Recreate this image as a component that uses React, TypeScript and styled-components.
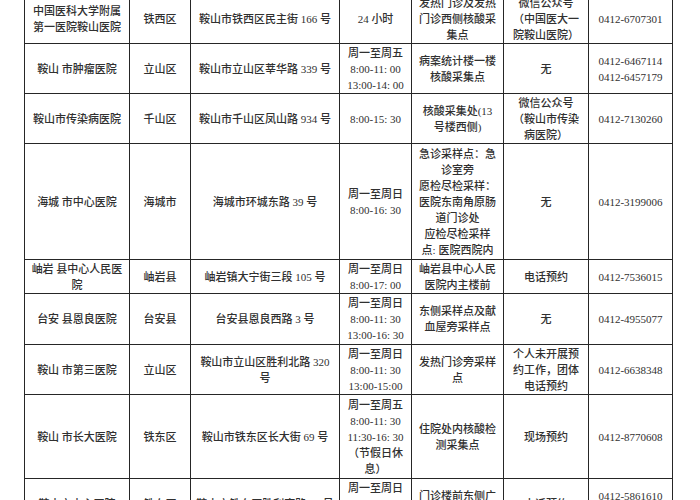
import React from 'react';
import styled, { createGlobalStyle } from 'styled-components';

const Global = createGlobalStyle`
  html, body { margin: 0; padding: 0; background: #ffffff; }
  body { width: 700px; height: 500px; overflow: hidden; }
`;

const Page = styled.div`
  width: 700px;
  height: 500px;
  overflow: hidden;
  background: #ffffff;
  padding-left: 24px;
  box-sizing: border-box;
`;

const Table = styled.table`
  border-collapse: collapse;
  table-layout: fixed;
  width: 648px;
  margin-top: -7px;
  font-family: "Liberation Serif", "Noto Sans CJK SC", serif;
  font-size: 11px;
  font-weight: 500;
  line-height: 16px;
  color: #303030;
`;

const Col = styled.col<{ $w: number }>`
  width: ${(p) => p.$w}px;
`;

const Row = styled.tr<{ $h: number }>`
  height: ${(p) => p.$h}px;
`;

const Cell = styled.td`
  border: 1px solid #262626;
  padding: 0;
  text-align: center;
  vertical-align: middle;
  white-space: nowrap;
  overflow: hidden;
`;

const widths = [105, 61, 149, 72, 92, 85, 84];

type RowData = { h: number; cells: string[][] };

const rows: RowData[] = [
  {
    h: 50,
    cells: [
      ['中国医科大学附属', '第一医院鞍山医院'],
      ['铁西区'],
      ['鞍山市铁西区民主街 166 号'],
      ['24 小时'],
      ['发热门诊及发热', '门诊西侧核酸采', '集点'],
      ['微信公众号', '（中国医大一', '院鞍山医院）'],
      ['0412-6707301'],
    ],
  },
  {
    h: 50,
    cells: [
      ['鞍山 市肿瘤医院'],
      ['立山区'],
      ['鞍山市立山区莘华路 339 号'],
      ['周一至周五', '8:00-11: 00', '13:00-14: 00'],
      ['病案统计楼一楼', '核酸采集点'],
      ['无'],
      ['0412-6467114', '0412-6457179'],
    ],
  },
  {
    h: 50,
    cells: [
      ['鞍山市传染病医院'],
      ['千山区'],
      ['鞍山市千山区凤山路 934 号'],
      ['8:00-15: 30'],
      ['核酸采集处(13', '号楼西侧)'],
      ['微信公众号', '（鞍山市传染', '病医院）'],
      ['0412-7130260'],
    ],
  },
  {
    h: 116,
    cells: [
      ['海城 市中心医院'],
      ['海城市'],
      ['海城市环城东路 39 号'],
      ['周一至周日', '8:00-16: 30'],
      ['急诊采样点：急', '诊室旁', '愿检尽检采样：', '医院东南角原肠', '道门诊处', '应检尽检采样', '点: 医院西院内'],
      ['无'],
      ['0412-3199006'],
    ],
  },
  {
    h: 34,
    cells: [
      ['岫岩 县中心人民医', '院'],
      ['岫岩县'],
      ['岫岩镇大宁街三段 105 号'],
      ['周一至周日', '8:00-17: 00'],
      ['岫岩县中心人民', '医院内主楼前'],
      ['电话预约'],
      ['0412-7536015'],
    ],
  },
  {
    h: 51,
    cells: [
      ['台安 县恩良医院'],
      ['台安县'],
      ['台安县恩良西路 3 号'],
      ['周一至周日', '8:00-11: 30', '13:00-16: 30'],
      ['东侧采样点及献', '血屋旁采样点'],
      ['无'],
      ['0412-4955077'],
    ],
  },
  {
    h: 50,
    cells: [
      ['鞍山 市第三医院'],
      ['立山区'],
      ['鞍山市立山区胜利北路 320', '号'],
      ['周一至周日', '8:00-11: 30', '13:00-15:00'],
      ['发热门诊旁采样', '点'],
      ['个人未开展预', '约工作，团体', '电话预约'],
      ['0412-6638348'],
    ],
  },
  {
    h: 84,
    cells: [
      ['鞍山 市长大医院'],
      ['铁东区'],
      ['鞍山市铁东区长大街 69 号'],
      ['周一至周五', '8:00-11: 30', '11:30-16: 30', '（节假日休', '息）'],
      ['住院处内核酸检', '测采集点'],
      ['现场预约'],
      ['0412-8770608'],
    ],
  },
  {
    h: 50,
    cells: [
      ['鞍山市中心医院'],
      ['铁东区'],
      ['鞍山市铁东区胜利南路 77 号'],
      ['周一至周日', '8:00-11: 30', '13:00-16: 00'],
      ['门诊楼前东侧广', '场'],
      ['电话预约'],
      ['0412-5861610', '0412-5861611'],
    ],
  },
];

const Lines: React.FC<{ lines: string[] }> = ({ lines }) => (
  <>
    {lines.map((l, i) => (
      <React.Fragment key={i}>
        {i > 0 && <br />}
        {l}
      </React.Fragment>
    ))}
  </>
);

export default function App() {
  return (
    <>
      <Global />
      <Page>
        <Table>
          <colgroup>
            {widths.map((w, i) => (
              <Col key={i} $w={w} />
            ))}
          </colgroup>
          <tbody>
            {rows.map((r, ri) => (
              <Row key={ri} $h={r.h}>
                {r.cells.map((c, ci) => (
                  <Cell key={ci}>
                    <Lines lines={c} />
                  </Cell>
                ))}
              </Row>
            ))}
          </tbody>
        </Table>
      </Page>
    </>
  );
}
